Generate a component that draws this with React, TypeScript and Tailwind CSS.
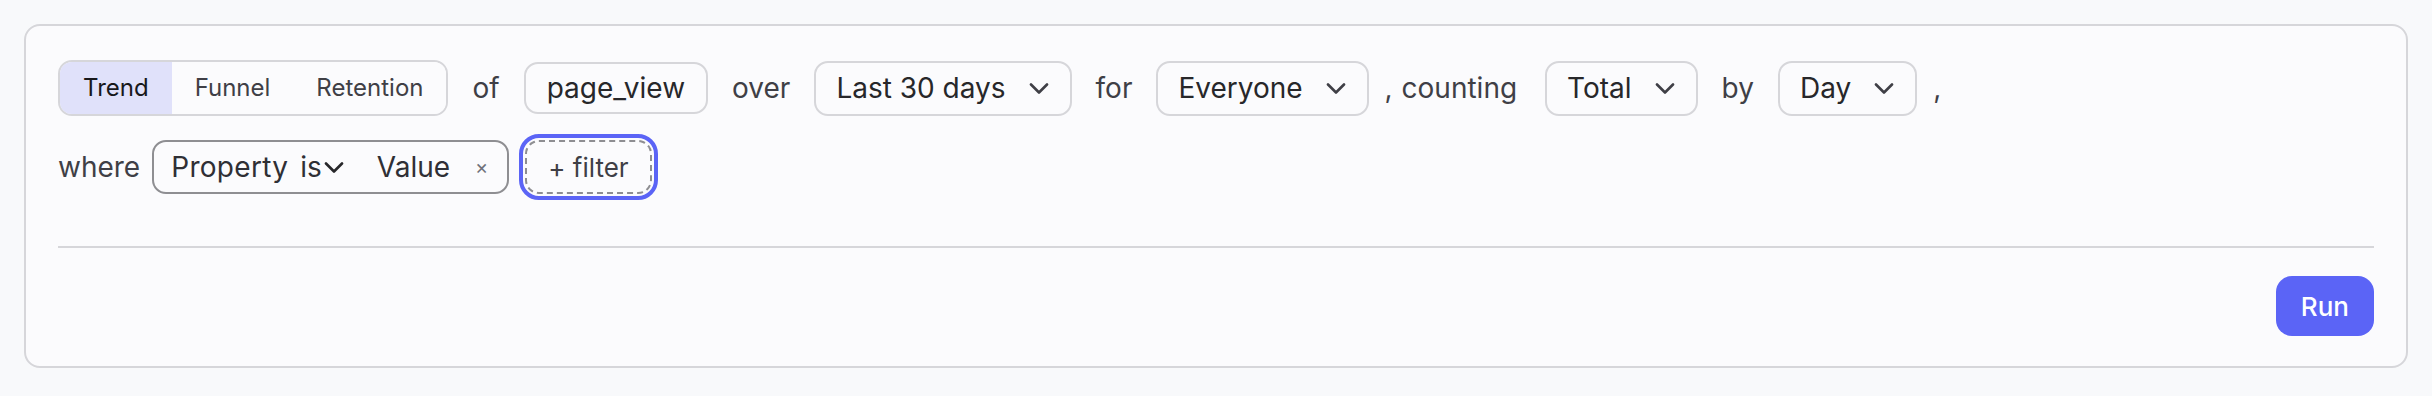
import { useState } from "react";

const modes = ["Trend", "Funnel", "Retention"];

function Chevron({ className = "" }: { className?: string }) {
    return (
        <svg width="20" height="11" viewBox="0 0 20 11" fill="none" className={className}>
            <polyline
                points="2,1.5 10,9.5 18,1.5"
                stroke="currentColor"
                strokeWidth="2.6"
                strokeLinecap="round"
                strokeLinejoin="round"
            />
        </svg>
    );
}

function Select({ label }: { label: string }) {
    return (
        <button className="flex h-[55px] items-center gap-[23px] rounded-[14px] border-2 border-[#d6d6da] bg-[#fbfbfd] pl-[20px] pr-[21px] text-[28px] text-[#27272a]">
            <span>{label}</span>
            <Chevron className="text-[#3f3f46]" />
        </button>
    );
}

function Word({ children, tight }: { children: React.ReactNode; tight?: boolean }) {
    return (
        <span className={`text-[28px] text-[#3f3f46] ${tight ? "pr-[8px]" : "px-[8px]"}`}>
            {children}
        </span>
    );
}

export default function App() {
    const [mode, setMode] = useState("Trend");

    return (
        <div className="min-h-screen bg-[#f8f9fb] px-6 pt-6 pb-[26px] font-[family-name:Inter,'Noto_Sans',sans-serif]">
            <div className="rounded-[16px] border-2 border-[#d6d6da] bg-[#fbfbfd] px-8 pt-[34px] pb-[30px]">
                <div className="flex flex-col gap-[24px]">
                    <div className="flex flex-wrap items-center gap-x-4">
                        <div className="flex h-[56px] overflow-hidden rounded-[14px] border-2 border-[#d6d6da]">
                            {modes.map((m) => (
                                <button
                                    key={m}
                                    onClick={() => setMode(m)}
                                    className={`px-[23px] text-[24px] ${mode === m
                                        ? "bg-[#e0e1fa] text-[#18181b]"
                                        : "bg-[#fbfbfd] text-[#3f3f46]"
                                        }`}
                                >
                                    {m}
                                </button>
                            ))}
                        </div>
                        <Word>of</Word>
                        <div className="flex h-[52px] items-center rounded-[14px] border-2 border-[#d6d6da] bg-[#fbfbfd] px-[21px] text-[28px] text-[#27272a]">
                            page_view
                        </div>
                        <Word>over</Word>
                        <Select label="Last 30 days" />
                        <Word>for</Word>
                        <Select label="Everyone" />
                        <span className="pr-[12px] text-[28px] text-[#3f3f46] [word-spacing:1px]">
                            , counting
                        </span>
                        <Select label="Total" />
                        <Word>by</Word>
                        <Select label="Day" />
                        <Word tight>,</Word>
                    </div>

                    <div className="flex items-center">
                        <span className="text-[28px] text-[#3f3f46]">where</span>
                        <div className="ml-3 flex h-[54px] items-center rounded-[14px] border-2 border-[#8e8e92] bg-[#fbfbfd] pl-[17px] pr-[19px] text-[28px] text-[#2f2f35]">
                            <span className="tracking-[0.3px]">Property</span>
                            <span className="ml-[12px] flex items-center gap-[2px]">
                                is
                                <Chevron className="text-[#27272a]" />
                            </span>
                            <span className="ml-[33px]">Value</span>
                            <span className="ml-[25px] text-[20px] text-[#71717a]">×</span>
                        </div>
                        <button className="ml-4 flex h-[54px] items-center rounded-[14px] border-2 border-dashed border-[#8e8e92] bg-[#fbfbfd] px-[21px] text-[26px] text-[#3f3f46] outline-4 outline-offset-2 outline-[#5b64f6]">
                            + filter
                        </button>
                    </div>
                </div>

                <div className="mt-[52px] h-[2px] bg-[#d6d6da]" />

                <div className="mt-[28px] flex justify-end">
                    <button className="h-[60px] rounded-[16px] bg-[#5b64f6] px-[25px] text-[26px] font-medium text-white">
                        Run
                    </button>
                </div>
            </div>
        </div>
    );
}
